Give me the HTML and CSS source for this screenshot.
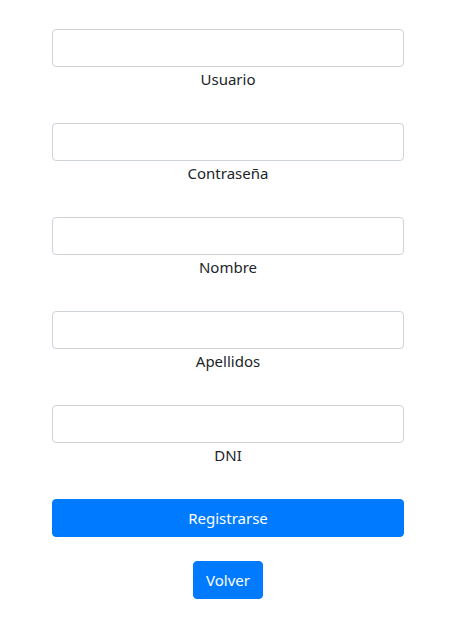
FILE: index.html
```html
<!DOCTYPE html>
<html lang="es">
<head>
<meta charset="utf-8">
<link rel="stylesheet" href="styles.css">
</head>
<body>
<form class="form">
  <div class="group">
    <input class="field" type="text" id="usuario">
    <label class="label" for="usuario">Usuario</label>
  </div>
  <div class="group">
    <input class="field" type="password" id="pass">
    <label class="label" for="pass">Contraseña</label>
  </div>
  <div class="group">
    <input class="field" type="text" id="nombre">
    <label class="label" for="nombre">Nombre</label>
  </div>
  <div class="group">
    <input class="field" type="text" id="apellidos">
    <label class="label" for="apellidos">Apellidos</label>
  </div>
  <div class="group">
    <input class="field" type="text" id="dni">
    <label class="label" for="dni">DNI</label>
  </div>
  <button class="btn btn-block" type="button">Registrarse</button>
  <button class="btn btn-back" type="button">Volver</button>
</form>
</body>
</html>
```
FILE: styles.css
```css
* { box-sizing: border-box; }
html, body { margin: 0; padding: 0; background: #fff; }
body {
  font-family: "Noto Sans", "Open Sans", sans-serif;
  font-size: 15px;
  line-height: 24px;
  color: #212529;
}
.form {
  width: 352px;
  margin: 0 0 0 52px;
  padding-top: 29px;
  display: flex;
  flex-direction: column;
  align-items: center;
}
.group {
  width: 100%;
  display: flex;
  flex-direction: column;
  align-items: center;
  margin-bottom: 32px;
}
.field {
  width: 100%;
  height: 38px;
  border: 1px solid #ced4da;
  border-radius: 4px;
  background: #fff;
  padding: 6px 12px;
  font: inherit;
  outline: none;
}
.label {
  display: block;
  height: 24px;
  text-align: center;
}
.btn {
  height: 38px;
  border: 1px solid #007bff;
  background: #007bff;
  color: #fff;
  border-radius: 4px;
  font: inherit;
  padding: 6px 12px;
  cursor: pointer;
}
.btn-block { width: 100%; margin-bottom: 24px; }
.btn-back { width: 70px; padding: 6px 0; }
```
